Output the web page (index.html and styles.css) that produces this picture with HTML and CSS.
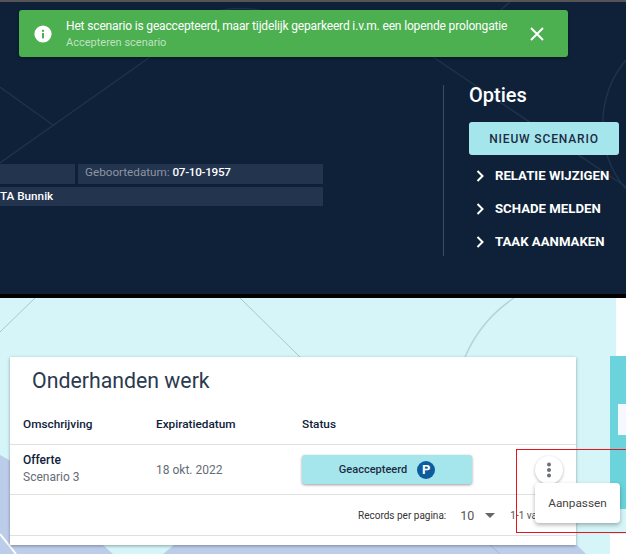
FILE: index.html
```html
<!DOCTYPE html>
<html lang="nl">
<head>
  <meta charset="UTF-8" />
  <meta name="viewport" content="width=device-width, initial-scale=1" />
  <title>Onderhanden werk</title>
  <link rel="stylesheet" href="styles.css">
</head>
<body>
  <section class="hero">
    <svg class="deco" width="626" height="292" viewBox="0 0 626 292" fill="none" stroke="#1f324b" stroke-width="1.5">
      <path d="M0 85 L53 123" />
      <path d="M0 161 L150 55" />
      <path d="M433 55 L626 185" />
      <path d="M626 58 C596 92 594 150 626 187" />
      <path d="M206 14 C222 4 258 4 276 14" />
      <path d="M496 12 L510 0" />
    </svg>

    <div class="toast">
      <svg class="toast-icon" width="18" height="18" viewBox="0 0 18 18">
        <circle cx="9" cy="9" r="8.6" fill="#fff" />
        <rect x="8" y="8" width="2" height="5.4" fill="#4caf50" />
        <rect x="8" y="4.8" width="2" height="2" fill="#4caf50" />
      </svg>
      <div class="toast-text">
        <div class="toast-title">Het scenario is geaccepteerd, maar tijdelijk geparkeerd i.v.m. een lopende prolongatie</div>
        <div class="toast-sub">Accepteren scenario</div>
      </div>
      <svg class="toast-close" width="14" height="14" viewBox="0 0 14 14" stroke="#fff" stroke-width="2" fill="none">
        <path d="M1 1 L13 13 M13 1 L1 13" />
      </svg>
    </div>

    <div class="person">
      <div class="person-row">
        <div class="chip chip-name"></div>
        <div class="chip chip-date">Geboortedatum: <strong>07-10-1957</strong></div>
      </div>
      <div class="chip chip-place">TA Bunnik</div>
    </div>

    <div class="options">
      <h2>Opties</h2>
      <button class="btn-new">NIEUW SCENARIO</button>
      <a class="opt-link" href="#"><svg width="9" height="12" viewBox="0 0 9 12" fill="none" stroke="#fff" stroke-width="2"><path d="M1.5 1 L6.5 6 L1.5 11" /></svg>RELATIE WIJZIGEN</a>
      <a class="opt-link" href="#"><svg width="9" height="12" viewBox="0 0 9 12" fill="none" stroke="#fff" stroke-width="2"><path d="M1.5 1 L6.5 6 L1.5 11" /></svg>SCHADE MELDEN</a>
      <a class="opt-link" href="#"><svg width="9" height="12" viewBox="0 0 9 12" fill="none" stroke="#fff" stroke-width="2"><path d="M1.5 1 L6.5 6 L1.5 11" /></svg>TAAK AANMAKEN</a>
    </div>
  </section>

  <section class="lower">
    <svg class="deco" width="626" height="256" viewBox="0 0 626 256" fill="none">
      <path d="M0 157 L60 190 L103 247 L113 256 L163 256 L174 247 L300 200 L577 247 L586 256 L0 256 Z" fill="#bccdea" />
      <path d="M35 0 L0 34" stroke="#aec4c9" stroke-width="1" />
      <path d="M240 0 L300 59" stroke="#aec4c9" stroke-width="1" />
      <path d="M514 0 C490 16 474 38 465 59" stroke="#b4d4da" stroke-width="1.5" />
      <path d="M0 236 L16 256" stroke="#fff" stroke-width="2" />
      <path d="M490 247 L500 256" stroke="#a5b8d6" stroke-width="1" />
    </svg>

    <div class="card">
      <h1>Onderhanden werk</h1>
      <div class="grid-row grid-head">
        <div>Omschrijving</div>
        <div>Expiratiedatum</div>
        <div>Status</div>
      </div>
      <div class="grid-row grid-body">
        <div>
          <div class="item-title">Offerte</div>
          <div class="item-sub">Scenario 3</div>
        </div>
        <div class="item-date">18 okt. 2022</div>
        <div class="status">
          Geaccepteerd
          <span class="status-badge">P</span>
        </div>
        <div class="more">
          <svg width="6" height="16" viewBox="0 0 6 16" fill="#6b6f76">
            <circle cx="3" cy="2.5" r="2" /><circle cx="3" cy="8" r="2" /><circle cx="3" cy="13.5" r="2" />
          </svg>
        </div>
      </div>
      <div class="pager">
        <span class="pager-label">Records per pagina:</span>
        <span class="pager-size">10</span>
        <span class="pager-caret"></span>
        <span class="pager-range">1-1 van 1</span>
      </div>
      <div class="card-foot"></div>
    </div>

    <div class="side">
      <div class="side-top"></div>
      <div class="side-panel">
        <div class="side-input"></div>
      </div>
      <div class="side-card"></div>
    </div>

    <div class="menu">Aanpassen</div>
    <div class="marker"></div>
  </section>
</body>
</html>
```

FILE: styles.css
```css
html, body {
  margin: 0; height: 554px; overflow: hidden;
}
body {
  font-family: Roboto, Arial, sans-serif;
  background: #000;
  border-top: 2px solid #555;
  box-sizing: border-box;
}
.deco {
  position: absolute; left: 0; top: 0;
}

/* bovenste deel */
.hero {
  position: relative; height: 292px; background: #0e2139; color: #fff;
  display: flex; overflow: hidden;
}
.toast {
  position: absolute; left: 19px; top: 8px; width: 549px; height: 47px;
  box-sizing: border-box; padding: 0 24px 0 15px;
  display: flex; align-items: center;
  background: #4caf50; border-radius: 3px;
  box-shadow: 0 1px 3px rgba(0,0,0,.4);
}
.toast-icon { flex: none; margin-right: 14px; }
.toast-text { flex: 1; }
.toast-title { font-size: 12px; letter-spacing: -.15px; line-height: 16px; white-space: nowrap; }
.toast-sub { font-size: 11px; line-height: 15px; margin-top: 1px; color: #bfe3c1; }
.toast-close { flex: none; }

.person {
  position: relative; width: 323px; margin-top: 162px;
  display: flex; flex-direction: column; gap: 3px;
}
.person-row { display: flex; gap: 3px; }
.chip {
  height: 20px; line-height: 17px; background: #23344f; font-size: 11.7px;
}
.chip-name { width: 75px; }
.chip-date { flex: 1; padding-left: 7px; color: #8d95a1; }
.chip-date strong { color: #fff; font-weight: 500; letter-spacing: -.3px; }
.chip-place { height: 19px; line-height: 18px; font-weight: 500; }

.options {
  position: relative; margin: 83px 0 0 120px; height: 171px;
  border-left: 1px solid #3b4b62; padding-left: 25px;
}
.options h2 {
  margin: 0; font-size: 20px; font-weight: 500; line-height: 20px; margin-bottom: 17px;
}
.btn-new {
  display: block; width: 150px; height: 33px; border: none; border-radius: 3px;
  background: #a5e6ec; color: #1d2c44;
  font-family: inherit; font-size: 12px; font-weight: 500; letter-spacing: .85px;
  margin-bottom: 4px;
}
.opt-link {
  display: flex; align-items: center; height: 33px;
  color: #fff; text-decoration: none; font-size: 13.2px; font-weight: 700;
}
.opt-link svg { margin: 0 10px 0 7px; flex: none; }

/* onderste deel */
.lower {
  position: relative; height: 256px; margin-top: 4px; background: #d5f5f8;
  display: flex; overflow: hidden; padding: 59px 0 0 10px; box-sizing: border-box;
}
.card {
  position: relative; width: 566px; height: 188px; background: #fff;
  box-shadow: 0 1px 3px rgba(0,0,0,.35);
  color: #0e2139;
}
.card h1 {
  margin: 0; padding: 10px 0 0 22px; height: 36px;
  font-size: 21.3px; font-weight: 400; line-height: 28px; color: #2a3a4f;
}
.grid-row {
  display: grid; grid-template-columns: 133px 146px 170px 1fr;
  padding-left: 13px; align-items: center;
}
.grid-head {
  height: 41px; font-size: 11.8px; font-weight: 500; padding-top: 0;
  border-bottom: 1px solid #e0e0e0;
}
.grid-body {
  height: 49px; font-size: 12px; border-bottom: 1px solid #e0e0e0;
}
.item-title { font-weight: 500; line-height: 17px; margin-top: -2px; }
.item-sub { color: #666c75; line-height: 17px; }
.item-date { color: #666c75; }
.status {
  height: 29px; border-radius: 3px; background: #a5e6ec; color: #1d2c44;
  display: flex; align-items: center; justify-content: center; gap: 10px;
  font-size: 11px; font-weight: 500;
  box-shadow: 0 1px 3px rgba(0,0,0,.4);
}
.status-badge {
  width: 18px; height: 18px; border-radius: 50%; background: #0d5c9e; color: #fff;
  display: flex; align-items: center; justify-content: center;
  font-size: 13px; font-weight: 700;
}
.more {
  width: 28px; height: 28px; border-radius: 50%; background: #fff;
  margin-left: 63px;
  display: flex; align-items: center; justify-content: center;
  box-shadow: 0 1px 3px rgba(0,0,0,.3);
}
.pager {
  height: 40px; display: flex; align-items: center; padding-left: 348px;
  font-size: 10px; color: #333;
  border-bottom: 1px solid #e0e0e0;
}
.pager-size { margin-left: 14px; font-size: 12.5px; color: #555; }
.pager-caret {
  margin-left: 11px; width: 0; height: 0;
  border-left: 5px solid transparent; border-right: 5px solid transparent;
  border-top: 5px solid #666;
}
.pager-range { margin-left: 15px; color: #555; }

.side {
  position: relative; flex: 1; margin-left: 34px; margin-top: -59px;
  display: flex; flex-direction: column;
}
.side-top { height: 59px; width: 100%; background: linear-gradient(to right, transparent 6px, #fff 6px); }
.side-panel {
  height: 156px; background: #6ad3dc; padding-top: 48px; box-sizing: border-box;
  display: flex; justify-content: flex-end;
}
.side-input { width: 8px; height: 31px; background: #f5f8ff; }
.side-card { margin-top: 25px; height: 20px; background: #fff; }

.menu {
  position: absolute; left: 535px; top: 185px; width: 85px; height: 40px;
  background: #fff; border-radius: 4px; color: #444;
  font-size: 11.8px; line-height: 40px; text-align: center;
  box-shadow: 0 2px 4px rgba(0,0,0,.3);
}
.marker {
  position: absolute; left: 516px; top: 151px; width: 130px; height: 82px;
  border: 1px solid #e8141c;
}
```
